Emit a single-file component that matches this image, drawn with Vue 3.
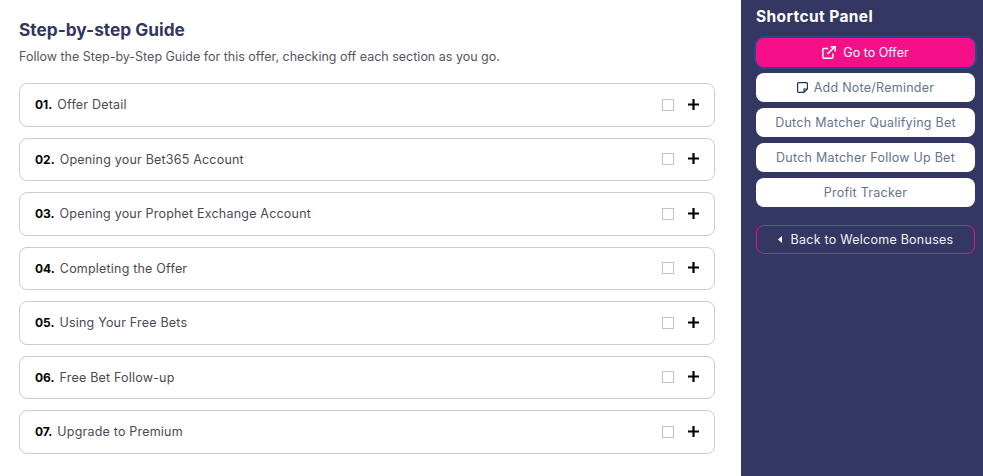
<script setup>
const steps = [
  ['01.', 'Offer Detail'],
  ['02.', 'Opening your Bet365 Account'],
  ['03.', 'Opening your Prophet Exchange Account'],
  ['04.', 'Completing the Offer'],
  ['05.', 'Using Your Free Bets'],
  ['06.', 'Free Bet Follow-up'],
  ['07.', 'Upgrade to Premium'],
]
const links = ['Dutch Matcher Qualifying Bet', 'Dutch Matcher Follow Up Bet', 'Profit Tracker']
</script>

<template>
  <div class="page">
    <main class="guide">
      <h1>Step-by-step Guide</h1>
      <p class="lead">Follow the Step-by-Step Guide for this offer, checking off each section as you go.</p>
      <div class="steps">
        <div v-for="s in steps" :key="s[0]" class="step">
          <b>{{ s[0] }}</b>
          <span class="label">{{ s[1] }}</span>
          <span class="check"></span>
          <svg class="plus" width="11" height="11" viewBox="0 0 11 11"><path d="M5.5 0v11M0 5.5h11" stroke="#000" stroke-width="2.2" fill="none"/></svg>
        </div>
      </div>
    </main>
    <aside class="panel">
      <h2>Shortcut Panel</h2>
      <a class="btn primary">
        <svg width="14" height="13" viewBox="0 0 14 13" fill="none" stroke="#fff"><path d="M10.8 7.5v3.7a1 1 0 0 1-1 1H1.8a1 1 0 0 1-1-1V3.6a1 1 0 0 1 1-1h4.4" stroke-width="1.5"/><path d="M5.4 8 12.4 1.2" stroke-width="1.7"/><path d="M8.6.8h4.6v4.6" stroke-width="1.6"/></svg>
        Go to Offer
      </a>
      <a class="btn">
        <svg width="11" height="11" viewBox="0 0 11 11" fill="none" stroke="#1f3560" stroke-width="1.2"><path d="M10.4 7V1.4a.8.8 0 0 0-.8-.8H1.4a.8.8 0 0 0-.8.8v8.2c0 .4.4.8.8.8H7zM10.4 7H7v3.4"/></svg>
        Add Note/Reminder
      </a>
      <a v-for="l in links" :key="l" class="btn">{{ l }}</a>
      <a class="btn back">
        <svg width="4" height="7" viewBox="0 0 4 7"><path d="M4 0v7L0 3.5z" fill="#fff"/></svg>
        Back to Welcome Bonuses
      </a>
    </aside>
  </div>
</template>

<style>
html, body { margin: 0; background: #fff; }
</style>

<style scoped>
.page {
  display: flex;
  height: 476px;
  overflow: hidden;
  font-family: Inter, "Open Sans", sans-serif;
}
.guide { flex: 1; padding: 21px 26px 0 19px; min-width: 0; }
h1 {
  margin: 0;
  font-size: 17.3px;
  line-height: 18px;
  font-weight: 700;
  color: #33375f;
}
.lead {
  margin: 10px 0 0;
  font-size: 12.5px;
  line-height: 16px;
  color: #55555f;
}
.steps { display: flex; flex-direction: column; gap: 11px; margin-top: 18px; }
.step {
  box-sizing: border-box;
  height: 43.5px;
  display: flex;
  align-items: center;
  padding: 0 15px;
  border: 1px solid #ccc;
  border-radius: 8px;
  font-size: 12.5px;
  letter-spacing: .2px;
  color: #4a4a54;
}
.step b { color: #000; font-weight: 700; font-size: 12px; letter-spacing: 0; margin-right: 5px; }
.label { flex: 1; }
.check {
  width: 10px;
  height: 10px;
  border: 1px solid #bfc4c9;
  margin-right: 14px;
}
.plus { display: block; margin-top: -1px; }
.panel {
  box-sizing: border-box;
  width: 242px;
  flex: none;
  background: #343761;
  padding: 8px 8px 0 15px;
  display: flex;
  flex-direction: column;
}
h2 {
  margin: 0 0 12px;
  font-size: 15.5px;
  letter-spacing: .4px;
  line-height: 18px;
  font-weight: 700;
  color: #fff;
}
.btn {
  box-sizing: border-box;
  height: 29px;
  margin-bottom: 6px;
  border-radius: 8px;
  background: #fff;
  display: flex;
  align-items: center;
  justify-content: center;
  gap: 6px;
  font-size: 12.5px;
  letter-spacing: .25px;
  color: #66738f;
}
.primary {
  background: #f5108a;
  color: #fff;
  box-shadow: 0 0 0 2px #234a8a;
  gap: 7px;
  letter-spacing: 0;
}
.back {
  margin-top: 12px;
  background: transparent;
  border: 1px solid #e0167f;
  color: #f1f1f6;
  gap: 9px;
}
</style>
